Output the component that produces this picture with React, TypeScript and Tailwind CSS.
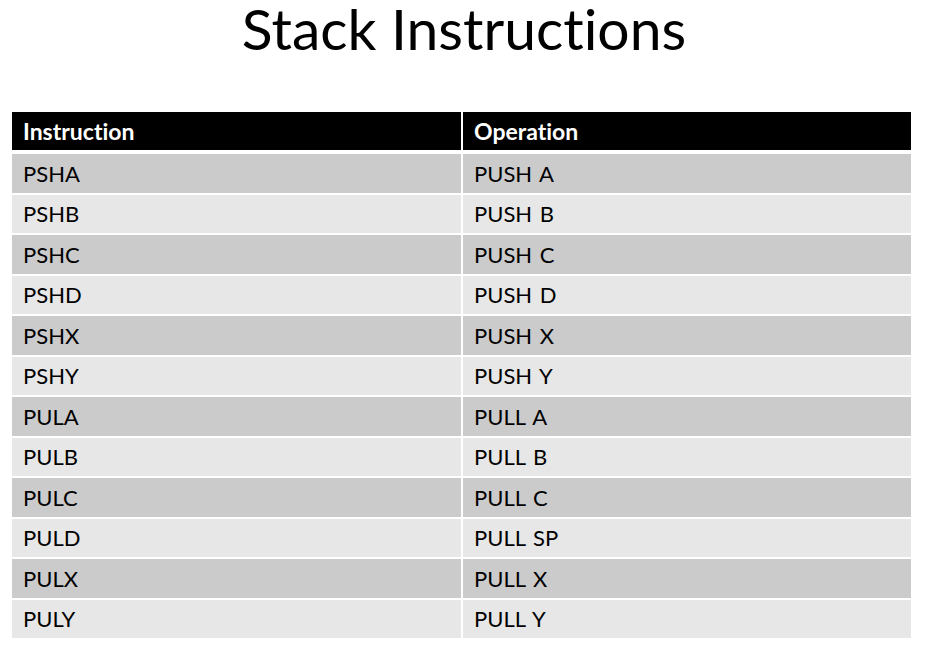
import React from "react";

const rows: [string, string][] = [
  ["PSHA", "PUSH A"],
  ["PSHB", "PUSH B"],
  ["PSHC", "PUSH C"],
  ["PSHD", "PUSH D"],
  ["PSHX", "PUSH X"],
  ["PSHY", "PUSH Y"],
  ["PULA", "PULL A"],
  ["PULB", "PULL B"],
  ["PULC", "PULL C"],
  ["PULD", "PULL SP"],
  ["PULX", "PULL X"],
  ["PULY", "PULL Y"],
];

export default function App() {
  return (
    <div
      className="w-[938px] h-[660px] bg-white text-black overflow-hidden [font-variant-ligatures:none]"
      style={{ fontFamily: "Lato, 'Open Sans', sans-serif" }}
    >
      <h1 className="h-[56px] text-center text-[57px] leading-[56px] font-normal pr-[10px]">
        Stack Instructions
      </h1>
      <div className="ml-[12px] mt-[56px] w-[899px] flex flex-col">
        <div className="grid grid-cols-[449px_448px] gap-x-[2px] h-[38px]">
          <div className="bg-black text-white font-bold text-[23px] pl-[11px] flex items-center">
            Instruction
          </div>
          <div className="bg-black text-white font-bold text-[23px] pl-[11px] flex items-center">
            Operation
          </div>
        </div>
        <div className="mt-[4px] flex flex-col gap-y-[2px]">
          {rows.map(([a, b], i) => {
            const bg = i % 2 === 0 ? "bg-[#cbcbcb]" : "bg-[#e7e7e7]";
            return (
              <div key={a} className="grid grid-cols-[449px_448px] gap-x-[2px] h-[38.5px]">
                <div className={`${bg} pl-[11px] flex items-center text-[22px]`}>{a}</div>
                <div className={`${bg} pl-[11px] flex items-center text-[22px] [word-spacing:2px]`}>
                  {b}
                </div>
              </div>
            );
          })}
        </div>
      </div>
    </div>
  );
}
